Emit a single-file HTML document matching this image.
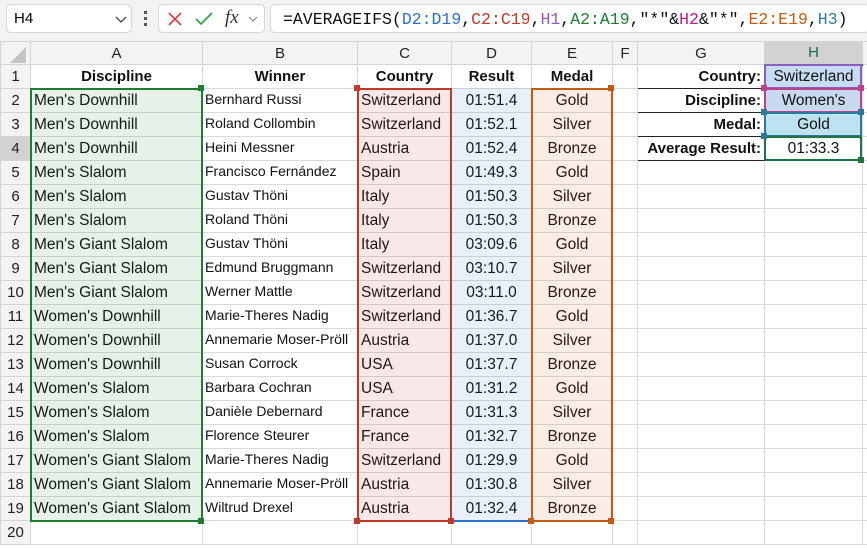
<!DOCTYPE html>
<html><head><meta charset="utf-8"><style>
*{margin:0;padding:0;box-sizing:border-box}
body{width:867px;height:548px;overflow:hidden;background:#fff;font-family:"Liberation Sans",Arial,sans-serif;position:relative}
.top{position:absolute;left:0;top:0;width:867px;height:41px;background:#f3f3f3}
.box{position:absolute;background:#fff;border:1px solid #d6d6d6;border-radius:5px}
table{position:absolute;left:0;top:41px;border-collapse:collapse;table-layout:fixed;width:868px}
td{border:1px solid #dadada;height:24px;font-size:15.5px;padding:0 3px;white-space:nowrap;overflow:hidden;color:#111}
tr.h td{height:23px;background:#f3f3f3;text-align:center;font-size:15px;color:#222;border-color:#d4d4d4}
td.rn{background:#f3f3f3;text-align:center;padding:0;color:#222;border-color:#d4d4d4;font-size:15px}
td.b{font-weight:bold;text-align:center;font-size:15px}
td.w{font-size:14px;vertical-align:top;padding-top:2px;padding-left:2px}
td.c{text-align:center}
td.r{text-align:right;font-weight:bold;padding-right:3px;font-size:15px}
.ov{position:absolute;pointer-events:none}
.q{position:absolute;width:6px;height:6px}
.f{font-family:"Liberation Mono",monospace;font-size:16.5px;position:absolute;left:283px;top:10px;color:#111;white-space:pre}
</style></head><body>
<div class="top"></div>
<div class="box" style="left:6px;top:4px;width:126px;height:29px"><span style="position:absolute;left:7px;top:5px;font-size:15px">H4</span><svg style="position:absolute;left:108px;top:11px" width="12" height="8"><path d="M1 1l5 5 5-5" stroke="#444" stroke-width="1.3" fill="none"/></svg></div>
<div style="position:absolute;left:144px;top:11px;width:3px;height:16px"><div style="width:3px;height:3px;background:#555;margin-bottom:3px"></div><div style="width:3px;height:3px;background:#555;margin-bottom:3px"></div><div style="width:3px;height:3px;background:#555"></div></div>
<div class="box" style="left:158px;top:4px;width:107px;height:29px">
<svg style="position:absolute;left:8px;top:6px" width="16" height="16"><path d="M2 2l12 12M14 2L2 14" stroke="#e03a3a" stroke-width="1.6"/></svg>
<svg style="position:absolute;left:35px;top:6px" width="20" height="16"><path d="M2 8l5 5L18 2" stroke="#2e9e45" stroke-width="1.6" fill="none"/></svg>
<span style="position:absolute;left:66px;top:2px;font-family:'Liberation Serif',serif;font-style:italic;font-size:19px;color:#333">fx</span>
<svg style="position:absolute;left:89px;top:11px" width="10" height="7"><path d="M1 1l4 4 4-4" stroke="#888" stroke-width="1.2" fill="none"/></svg></div>
<div class="box" style="left:270px;top:4px;width:600px;height:29px"></div>
<div class="f">=AVERAGEIFS(<span style="color:#2d6fce">D2:D19</span>,<span style="color:#c0392b">C2:C19</span>,<span style="color:#8c5cc0">H1</span>,<span style="color:#1e7d32">A2:A19</span>,"*"&amp;<span style="color:#c0188a">H2</span>&amp;"*",<span style="color:#c55a11">E2:E19</span>,<span style="color:#2a7a9e">H3</span>)</div>
<table>
<colgroup><col style="width:30px"><col style="width:172px"><col style="width:155px"><col style="width:94px"><col style="width:80px"><col style="width:81px"><col style="width:25px"><col style="width:127px"><col style="width:98px"><col style="width:6px"></colgroup>
<tr class="h"><td></td><td>A</td><td>B</td><td>C</td><td>D</td><td>E</td><td>F</td><td>G</td><td style="background:#d2d2d2;color:#1e6b3a;border-bottom:2px solid #217346">H</td><td></td></tr>
<tr><td class="rn">1</td><td class="b">Discipline</td><td class="b">Winner</td><td class="b">Country</td><td class="b">Result</td><td class="b">Medal</td><td></td><td class="r" style="border:1px solid #222">Country:</td><td class="c" style="background:#c6dcf2">Switzerland</td><td></td></tr>
<tr><td class="rn">2</td><td>Men's Downhill</td><td class="w">Bernhard Russi</td><td>Switzerland</td><td class="c">01:51.4</td><td class="c">Gold</td><td></td><td class="r" style="border:1px solid #222">Discipline:</td><td class="c" style="background:#c8d8ee">Women's</td><td></td></tr>
<tr><td class="rn">3</td><td>Men's Downhill</td><td class="w">Roland Collombin</td><td>Switzerland</td><td class="c">01:52.1</td><td class="c">Silver</td><td></td><td class="r" style="border:1px solid #222">Medal:</td><td class="c" style="background:#bde2f0">Gold</td><td></td></tr>
<tr><td class="rn" style="background:#d2d2d2">4</td><td>Men's Downhill</td><td class="w">Heini Messner</td><td>Austria</td><td class="c">01:52.4</td><td class="c">Bronze</td><td></td><td class="r" style="border:1px solid #222">Average Result:</td><td class="c">01:33.3</td><td></td></tr>
<tr><td class="rn">5</td><td>Men's Slalom</td><td class="w">Francisco Fernández</td><td>Spain</td><td class="c">01:49.3</td><td class="c">Gold</td><td></td><td></td><td></td><td></td></tr>
<tr><td class="rn">6</td><td>Men's Slalom</td><td class="w">Gustav Thöni</td><td>Italy</td><td class="c">01:50.3</td><td class="c">Silver</td><td></td><td></td><td></td><td></td></tr>
<tr><td class="rn">7</td><td>Men's Slalom</td><td class="w">Roland Thöni</td><td>Italy</td><td class="c">01:50.3</td><td class="c">Bronze</td><td></td><td></td><td></td><td></td></tr>
<tr><td class="rn">8</td><td>Men's Giant Slalom</td><td class="w">Gustav Thöni</td><td>Italy</td><td class="c">03:09.6</td><td class="c">Gold</td><td></td><td></td><td></td><td></td></tr>
<tr><td class="rn">9</td><td>Men's Giant Slalom</td><td class="w">Edmund Bruggmann</td><td>Switzerland</td><td class="c">03:10.7</td><td class="c">Silver</td><td></td><td></td><td></td><td></td></tr>
<tr><td class="rn">10</td><td>Men's Giant Slalom</td><td class="w">Werner Mattle</td><td>Switzerland</td><td class="c">03:11.0</td><td class="c">Bronze</td><td></td><td></td><td></td><td></td></tr>
<tr><td class="rn">11</td><td>Women's Downhill</td><td class="w">Marie-Theres Nadig</td><td>Switzerland</td><td class="c">01:36.7</td><td class="c">Gold</td><td></td><td></td><td></td><td></td></tr>
<tr><td class="rn">12</td><td>Women's Downhill</td><td class="w">Annemarie Moser-Pröll</td><td>Austria</td><td class="c">01:37.0</td><td class="c">Silver</td><td></td><td></td><td></td><td></td></tr>
<tr><td class="rn">13</td><td>Women's Downhill</td><td class="w">Susan Corrock</td><td>USA</td><td class="c">01:37.7</td><td class="c">Bronze</td><td></td><td></td><td></td><td></td></tr>
<tr><td class="rn">14</td><td>Women's Slalom</td><td class="w">Barbara Cochran</td><td>USA</td><td class="c">01:31.2</td><td class="c">Gold</td><td></td><td></td><td></td><td></td></tr>
<tr><td class="rn">15</td><td>Women's Slalom</td><td class="w">Danièle Debernard</td><td>France</td><td class="c">01:31.3</td><td class="c">Silver</td><td></td><td></td><td></td><td></td></tr>
<tr><td class="rn">16</td><td>Women's Slalom</td><td class="w">Florence Steurer</td><td>France</td><td class="c">01:32.7</td><td class="c">Bronze</td><td></td><td></td><td></td><td></td></tr>
<tr><td class="rn">17</td><td>Women's Giant Slalom</td><td class="w">Marie-Theres Nadig</td><td>Switzerland</td><td class="c">01:29.9</td><td class="c">Gold</td><td></td><td></td><td></td><td></td></tr>
<tr><td class="rn">18</td><td>Women's Giant Slalom</td><td class="w">Annemarie Moser-Pröll</td><td>Austria</td><td class="c">01:30.8</td><td class="c">Silver</td><td></td><td></td><td></td><td></td></tr>
<tr><td class="rn">19</td><td>Women's Giant Slalom</td><td class="w">Wiltrud Drexel</td><td>Austria</td><td class="c">01:32.4</td><td class="c">Bronze</td><td></td><td></td><td></td><td></td></tr>
<tr><td class="rn">20</td><td></td><td></td><td></td><td></td><td></td><td></td><td></td><td></td><td></td></tr>
</table>
<div class="ov" style="left:30px;top:88px;width:173px;height:434px;background:rgba(30,125,50,0.11);border:2px solid #1e7d32"></div>
<div class="ov" style="left:357px;top:88px;width:95px;height:434px;background:rgba(192,57,43,0.11);border:2px solid #c0392b"></div>
<div class="ov" style="left:451px;top:88px;width:81px;height:434px;background:rgba(45,111,206,0.10);border-bottom:2px solid #2d6fce"></div>
<div class="ov" style="left:531px;top:88px;width:82px;height:434px;background:rgba(197,90,17,0.11);border:2px solid #c55a11"></div>
<div class="ov" style="left:764px;top:64px;width:98px;height:25px;border:2px solid #8c5cc0"></div>
<div class="ov" style="left:764px;top:88px;width:98px;height:25px;border:2px solid #b8438a"></div>
<div class="ov" style="left:764px;top:112px;width:98px;height:25px;border:2px solid #2a7a9e"></div>
<div class="ov" style="left:764px;top:136px;width:98px;height:25px;border:2px solid #217346"></div>
<div class="q" style="left:198px;top:85px;background:#1e7d32"></div>
<div class="q" style="left:198px;top:518px;background:#1e7d32"></div>
<div class="q" style="left:354px;top:85px;background:#c0392b"></div>
<div class="q" style="left:354px;top:518px;background:#c0392b"></div>
<div class="q" style="left:448px;top:518px;background:#c0392b"></div>
<div class="q" style="left:528px;top:518px;background:#c55a11"></div>
<div class="q" style="left:608px;top:85px;background:#c55a11"></div>
<div class="q" style="left:608px;top:518px;background:#c55a11"></div>
<div class="q" style="left:761px;top:85px;background:#b8438a"></div>
<div class="q" style="left:858px;top:85px;background:#b8438a"></div>
<div class="q" style="left:761px;top:109px;background:#2a7a9e"></div>
<div class="q" style="left:858px;top:109px;background:#2a7a9e"></div>
<div class="q" style="left:761px;top:133px;background:#2a7a9e"></div>
<div class="q" style="left:858px;top:157px;background:#217346"></div>
<svg class="ov" style="left:10px;top:47px" width="16" height="16"><path d="M16 0V16H0Z" fill="#c4c4c4"/></svg>
</body></html>
